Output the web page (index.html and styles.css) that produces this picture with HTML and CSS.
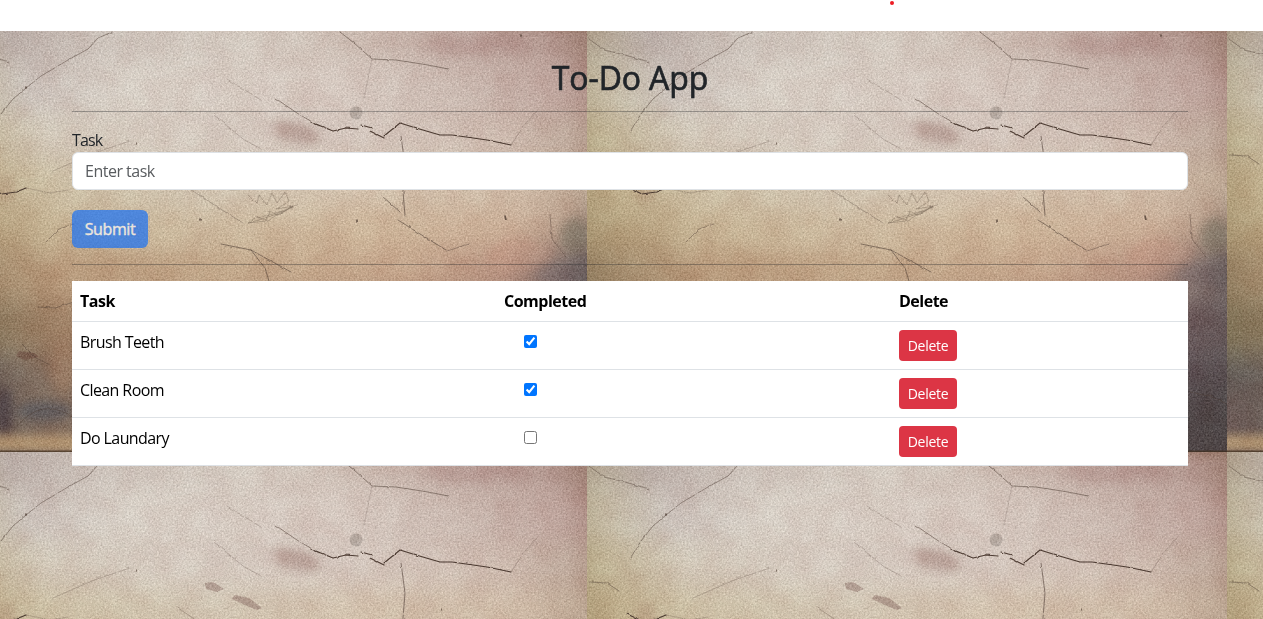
FILE: index.html
```
<!DOCTYPE html>
<html lang="en">
<head>
<meta charset="utf-8">
<title>To-Do App</title>
<link rel="stylesheet" href="styles.css">
</head>
<body>
<div class="topbar"><span class="dot"></span></div>
<div class="page">
<svg class="wall" width="1263" height="588" viewBox="0 31 1263 588" aria-hidden="true">
  <defs>
    <clipPath id="edge"><rect width="640" height="427"/></clipPath>
    <filter id="blend" filterUnits="userSpaceOnUse" x="-40" y="-60" width="720" height="550" color-interpolation-filters="sRGB"><feGaussianBlur stdDeviation="3 13"/></filter>
    <filter id="soft" filterUnits="userSpaceOnUse" x="-40" y="-40" width="720" height="520" color-interpolation-filters="sRGB"><feGaussianBlur stdDeviation="5"/></filter>
    <filter id="plaster" filterUnits="userSpaceOnUse" x="0" y="0" width="640" height="427" color-interpolation-filters="sRGB">
      <feTurbulence type="fractalNoise" baseFrequency="0.57" numOctaves="3" seed="4" result="n1"/>
      <feColorMatrix in="n1" values=".6 .4 0 0 0 .6 .4 0 0 0 .6 .4 0 0 0 0 0 0 0 1" result="fine"/>
      <feTurbulence type="fractalNoise" baseFrequency="0.035" numOctaves="4" seed="9" result="n2"/>
      <feColorMatrix in="n2" values=".6 0 0 0 .2 1 0 0 0 0 1 0 0 0 0 0 0 0 0 1" result="mottle"/>
      <feColorMatrix in="SourceGraphic" type="saturate" values="0.88" result="base"/>
      <feComposite in="base" in2="fine" operator="arithmetic" k2="1" k3="0.32" k4="-0.16" result="a"/>
      <feComposite in="a" in2="mottle" operator="arithmetic" k2="1" k3="0.09" k4="-0.04"/>
    </filter>
    <filter id="rough" filterUnits="userSpaceOnUse" x="0" y="0" width="640" height="427" color-interpolation-filters="sRGB">
      <feTurbulence type="fractalNoise" baseFrequency="0.15" numOctaves="2" seed="2"/>
      <feDisplacementMap in="SourceGraphic" scale="2.4" xChannelSelector="R" yChannelSelector="G"/>
    </filter>
    <linearGradient id="r1"><stop offset="0" stop-color="#a89880"/><stop offset=".05" stop-color="#b6a894"/><stop offset=".12" stop-color="#b9aaa3"/><stop offset=".25" stop-color="#cbbfb6"/><stop offset=".45" stop-color="#d3c8bd"/><stop offset=".65" stop-color="#cbb8ad"/><stop offset=".8" stop-color="#c1a89f"/><stop offset=".92" stop-color="#b3938a"/><stop offset="1" stop-color="#987565"/></linearGradient>
    <linearGradient id="r2"><stop offset="0" stop-color="#b3a483"/><stop offset=".06" stop-color="#c3b69e"/><stop offset=".15" stop-color="#cabfb7"/><stop offset=".3" stop-color="#d5cabf"/><stop offset=".6" stop-color="#d5c6bc"/><stop offset=".8" stop-color="#c9b4aa"/><stop offset=".92" stop-color="#bfa198"/><stop offset="1" stop-color="#ac877d"/></linearGradient>
    <linearGradient id="r3"><stop offset="0" stop-color="#b2a27a"/><stop offset=".06" stop-color="#c2b391"/><stop offset=".18" stop-color="#d0c3b2"/><stop offset=".35" stop-color="#d5c9bd"/><stop offset=".6" stop-color="#d3c3b9"/><stop offset=".85" stop-color="#ceb9ac"/><stop offset="1" stop-color="#b59a89"/></linearGradient>
    <linearGradient id="r4"><stop offset="0" stop-color="#ac976e"/><stop offset=".08" stop-color="#c0ac86"/><stop offset=".2" stop-color="#ccbc9f"/><stop offset=".4" stop-color="#d1c3ae"/><stop offset=".65" stop-color="#d2bea7"/><stop offset=".88" stop-color="#ceb7a1"/><stop offset="1" stop-color="#b79d87"/></linearGradient>
    <linearGradient id="r5"><stop offset="0" stop-color="#a68f67"/><stop offset=".08" stop-color="#b69f78"/><stop offset=".2" stop-color="#c6af8c"/><stop offset=".4" stop-color="#ccb698"/><stop offset=".65" stop-color="#ceb394"/><stop offset=".86" stop-color="#ccac92"/><stop offset=".94" stop-color="#b5947f"/><stop offset="1" stop-color="#867468"/></linearGradient>
    <linearGradient id="r6"><stop offset="0" stop-color="#8f7c5b"/><stop offset=".08" stop-color="#a38664"/><stop offset=".2" stop-color="#ba9876"/><stop offset=".45" stop-color="#c3a483"/><stop offset=".7" stop-color="#c5a184"/><stop offset=".85" stop-color="#b88e7a"/><stop offset=".93" stop-color="#83706b"/><stop offset="1" stop-color="#685957"/></linearGradient>
    <linearGradient id="r7"><stop offset="0" stop-color="#7d6f50"/><stop offset=".09" stop-color="#8c795b"/><stop offset=".2" stop-color="#a07c5e"/><stop offset=".9" stop-color="#6d5b5d"/><stop offset="1" stop-color="#615353"/></linearGradient>
    <linearGradient id="r8"><stop offset="0" stop-color="#5c5450"/><stop offset=".08" stop-color="#6a5f58"/><stop offset=".2" stop-color="#8c705c"/><stop offset=".9" stop-color="#5d5054"/><stop offset="1" stop-color="#564d4e"/></linearGradient>
    <linearGradient id="r9"><stop offset="0" stop-color="#6e5a56"/><stop offset=".07" stop-color="#6a5953"/><stop offset=".12" stop-color="#75655a"/><stop offset=".2" stop-color="#836b5a"/><stop offset=".9" stop-color="#524849"/><stop offset="1" stop-color="#4d4545"/></linearGradient>
    <g id="tile" clip-path="url(#edge)">
      <g filter="url(#plaster)">
        <rect width="640" height="427" fill="#b89878"/>
        <g filter="url(#blend)">
          <rect x="-20" y="-60" width="680" height="97" fill="url(#r1)"/>
          <rect x="-20" y="36" width="680" height="55" fill="url(#r2)"/>
          <rect x="-20" y="90" width="680" height="47" fill="url(#r3)"/>
          <rect x="-20" y="136" width="680" height="49" fill="url(#r4)"/>
          <rect x="-20" y="184" width="680" height="43" fill="url(#r5)"/>
          <rect x="-20" y="226" width="680" height="51" fill="url(#r6)"/>
          <rect x="-20" y="276" width="680" height="55" fill="url(#r7)"/>
          <rect x="-20" y="330" width="680" height="37" fill="url(#r8)"/>
          <rect x="-20" y="366" width="680" height="125" fill="url(#r9)"/>
        </g>
        <g filter="url(#soft)">
          <rect x="-10" y="410" width="150" height="16" fill="#b9966c" opacity=".9"/>
          <path d="M530-6h130v8H550z" fill="#805840" opacity=".6"/>
          <ellipse cx="530" cy="20" rx="54" ry="12" fill="#a97f78" opacity=".35"/>
          <ellipse cx="350" cy="108" rx="24" ry="10" transform="rotate(18 350 108)" fill="#a9857b" opacity=".6"/>
          <ellipse cx="628" cy="211" rx="15" ry="18" fill="#77705f" opacity=".6"/>
          <ellipse cx="637" cy="247" rx="20" ry="20" fill="#5d5052" opacity=".4"/>
          <ellipse cx="606" cy="250" rx="18" ry="12" fill="#6f5f60" opacity=".35"/>
          <ellipse cx="572" cy="230" rx="32" ry="16" fill="#c6917b" opacity=".4"/>
          <ellipse cx="57" cy="386" rx="9" ry="24" fill="#41323a" opacity=".7"/>
          <ellipse cx="98" cy="386" rx="28" ry="10" fill="#55545b" opacity=".7"/>
          <ellipse cx="59" cy="163" rx="9" ry="16" fill="#a17358" opacity=".3"/>
          <ellipse cx="117" cy="342" rx="14" ry="24" fill="#a27b5f" opacity=".6"/>
        </g>
        <g fill="#8f6f66">
          <circle cx="409" cy="88" r="6.5" fill="#8d8078" opacity=".45"/>
          <path d="M258 131l8-1 11 7-7 3-11-3zM288 143l14 3 13 10-5 2-12-5-13-6z" opacity=".5"/>
          <path d="M72 326l15 2 5 4-14 3-9-4z" fill="#6d473a" opacity=".6"/>
        </g>
      </g>
      <g filter="url(#rough)" fill="none" stroke="#4c3b32" stroke-linecap="round" stroke-linejoin="round">
        <path d="M328 73l22 15 22 13" stroke-width=".7" opacity=".75"/>
        <path d="M364 97l22 9 13-3M399 103l12 1M414 100l11 3M423 106l14 7M437 111l16-13 16 5 24 7 12 0 21 3 14 2 24 5" stroke-width="1.1"/>
        <path d="M564 120l14-21 12-13" stroke-width=".6" opacity=".4"/>
        <path d="M454 111l4 30-2 25 2 25" stroke-width=".8" opacity=".75"/>
        <path d="M393 7l14 11 18 16 24 1 32 5 20 4" stroke-width=".8" opacity=".65"/>
        <path d="M425 34l-3 15-5 24" stroke-width=".7" opacity=".25"/>
        <path d="M165 7l-14 6-10 11-20 11-27 16-15 12-13 11-12 15-10 16" stroke-width=".8" opacity=".6"/>
        <path d="M280 54l18 11 16 10M266 89l30 25 18 10M183 116l-36 12-41 18" stroke-width=".6" opacity=".4"/>
        <path d="M40 162l15 7 14-2 10-4" stroke-width="1.1"/>
        <path d="M79 163l24 5 18-3" stroke-width=".6" opacity=".4"/>
        <path d="M231 156l18 12 23 15 24 15" stroke-width=".7" opacity=".45"/>
        <path d="M435 171l18 16M451 195l22 14 26 16M274 219l30 6 14 18 4 13M304 225l40 22" stroke-width=".8" opacity=".7"/>
        <path d="M500 226l22-7M603 190l2 24 14 18M127 199l-15 5-13 13" stroke-width=".7" opacity=".55"/>
        <path d="M2 14l15 11 21 5 24 7M2 130l18 1 12 8M91 282l17 1 19-6M603 367l22 5 17 8M67 405q27-36 60-12M75 319l14 14 14 7" stroke-width=".8" opacity=".55"/>
        <path d="M301 170l9 9 2-9 8 10 5-12 5 10 8-11 4 9-12 8 16-3-15 9-9-4-3 9-10-3-8 6 18-2 11-6 14-7M302 198l25-8 24-11M311 193l24-7" stroke-width=".6" opacity=".45"/>
        <path d="M410 195v2M558 191l1 4M79 62v1M190 118v1M253 194v1M495 157v1M574 10v1M126 266l1 2" stroke-width="1.7" opacity=".75"/>
      </g>
      <path d="M0 426.3h640" stroke="#3d2b1c" stroke-width="1.6" opacity=".7"/>
    </g>
  </defs>
  <use href="#tile" x="-53" y="25"/><use href="#tile" x="587" y="25"/><use href="#tile" x="1227" y="25"/>
  <use href="#tile" x="-53" y="452"/><use href="#tile" x="587" y="452"/><use href="#tile" x="1227" y="452"/>
</svg>
<main class="container">
  <h1 class="title">To-Do App</h1>
  <hr class="rule">
  <form class="task-form">
    <label class="label" for="task">Task</label>
    <input class="field" id="task" type="text" placeholder="Enter task">
    <button class="btn btn-submit" type="submit" disabled>Submit</button>
  </form>
  <hr class="rule">
  <table class="tasks">
    <thead><tr><th class="col-task">Task</th><th class="col-done">Completed</th><th>Delete</th></tr></thead>
    <tbody>
      <tr><td>Brush Teeth</td><td><input class="check" type="checkbox" checked></td><td><button class="btn btn-delete">Delete</button></td></tr>
      <tr><td>Clean Room</td><td><input class="check" type="checkbox" checked></td><td><button class="btn btn-delete">Delete</button></td></tr>
      <tr><td>Do Laundary</td><td><input class="check" type="checkbox"></td><td><button class="btn btn-delete">Delete</button></td></tr>
    </tbody>
  </table>
</main>
</div>
</body>
</html>
```
FILE: styles.css
```
* { box-sizing: border-box; }
body {
  margin: 0;
  height: 619px;
  overflow: hidden;
  background: #fff;
  color: #212529;
  font: 400 16px/24px "Open Sans", "Noto Sans", sans-serif;
  letter-spacing: -0.6px;
}
.topbar { height: 31px; padding: 1px 0 0 890px; background: #fff; }
.dot { display: block; width: 4px; height: 4px; border-radius: 50%; background: #ed1c24; }
.page { display: grid; height: 588px; overflow: hidden; }
.wall { grid-area: 1 / 1; display: block; }
.container { grid-area: 1 / 1; position: relative; width: 1116px; margin-left: 72px; padding-top: 28px; }
.title { height: 36px; margin: 0 0 16px; font-size: 32px; line-height: 38px; font-weight: 500; letter-spacing: -0.1px; text-align: center; -webkit-text-stroke: 0.7px; }
.rule { height: 1px; margin: 16px 0; border: 0; background: #212529; opacity: .35; }
.task-form { display: flex; flex-direction: column; align-items: flex-start; }
.label { height: 24px; letter-spacing: -0.9px; }
.field {
  width: 100%; height: 38px; margin-bottom: 20px; padding: 6px 12px;
  border: 1px solid #dee2e6; border-radius: 6px; background: #fff;
  font: inherit; letter-spacing: -0.5px;
}
.field::placeholder { color: #595c5f; opacity: 1; }
.btn { display: block; border: 0; color: #fff; font-family: inherit; padding: 0; text-align: center; }
.btn-submit { width: 76px; height: 38px; border-radius: 6px; background: #0d6efd; font-size: 16px; letter-spacing: -0.4px; -webkit-text-stroke: 0.4px; opacity: .65; }
.btn-delete { width: 58px; height: 31px; border-radius: 4px; background: #dc3545; font-size: 14px; letter-spacing: -0.3px; }
.tasks { width: 100%; table-layout: fixed; border-collapse: separate; border-spacing: 0; background: #fff; color: #000; }
.tasks th, .tasks td { padding: 8px; text-align: left; vertical-align: top; border-bottom: 1px solid #dee2e6; }
.tasks th { height: 41px; font-weight: 700; letter-spacing: -0.5px; }
.tasks td { height: 48px; }
.col-task { width: 424px; }
.col-done { width: 395px; }
.check { display: block; width: 13px; height: 13px; margin: 5px 0 0 20px; }
```
